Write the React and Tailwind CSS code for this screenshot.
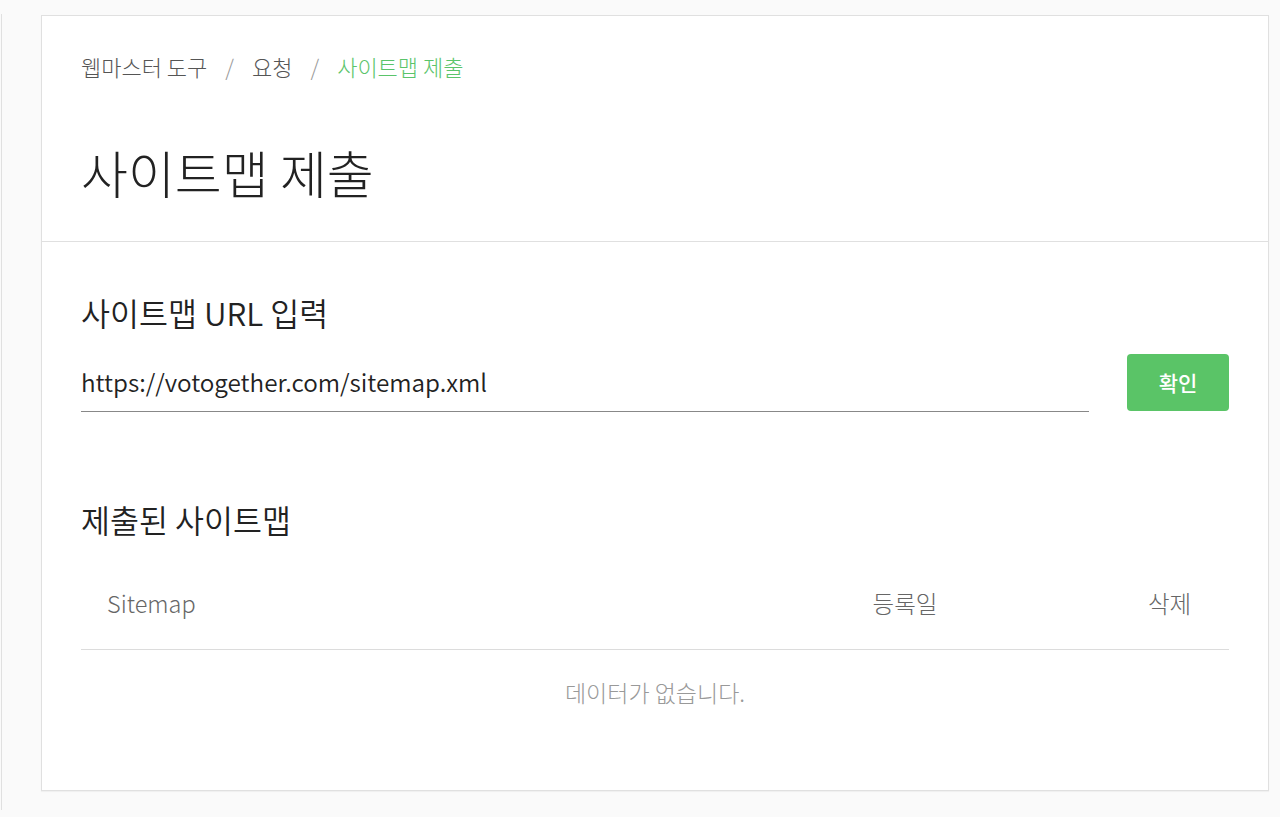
export default function App() {
  const font = { fontFamily: '"Noto Sans CJK KR", "Noto Sans", sans-serif' };
  return (
    <div className="relative w-[1280px] h-[817px] bg-[#fafafa] overflow-hidden" style={font}>
      <div className="absolute left-0 top-[14px] w-[2px] h-[796px] border-r border-[#e0e0e0]" />
      <div className="absolute left-[41px] top-[15px] w-[1228px] h-[776px] bg-white border border-[#e0e0e0] shadow-[0_1px_1px_rgba(0,0,0,0.04)] flex flex-col">
        {/* header */}
        <div className="px-[39px] pt-[30px] pb-[39px] border-b border-[#e0e0e0]">
          <div className="h-[40px] flex items-center text-[22px] text-[#555] font-light">
            <span>웹마스터 도구</span>
            <span className="mx-[18px] text-[#999]">/</span>
            <span>요청</span>
            <span className="mx-[18px] text-[#999]">/</span>
            <span className="text-[#5ac46a]">사이트맵 제출</span>
          </div>
          <div className="mt-[56px] h-[60px] flex items-center text-[51px] text-[#222] font-light">
            사이트맵 제출
          </div>
        </div>
        {/* body */}
        <div className="px-[39px] pt-[51px]">
          <div className="h-[40px] flex items-center text-[31.5px] text-[#222] font-[350]">사이트맵 URL 입력</div>
          <div className="mt-[21px] flex items-start">
            <div className="w-[1008px] h-[58px] border-b border-[#888] flex items-center text-[24.25px] text-[#222] font-[350]">
              https://votogether.com/sitemap.xml
            </div>
            <button className="ml-[38px] w-[102px] h-[57px] rounded-[4px] bg-[#5ac467] text-white text-[21px] font-medium flex items-center justify-center">
              확인
            </button>
          </div>
          <div className="mt-[88px] h-[40px] flex items-center text-[31.5px] text-[#222] font-[350]">제출된 사이트맵</div>
          <div className="mt-[19px] h-[91px] border-b border-[#dcdcdc] flex items-center text-[23.5px] text-[#666] font-light">
            <div className="w-[619px] pl-[26px]">Sitemap</div>
            <div className="w-[410px] text-center">등록일</div>
            <div className="w-[119px] text-center">삭제</div>
          </div>
          <div className="h-[84px] flex items-center justify-center text-[23px] text-[#999] font-light">데이터가 없습니다.</div>
        </div>
      </div>
    </div>
  );
}
